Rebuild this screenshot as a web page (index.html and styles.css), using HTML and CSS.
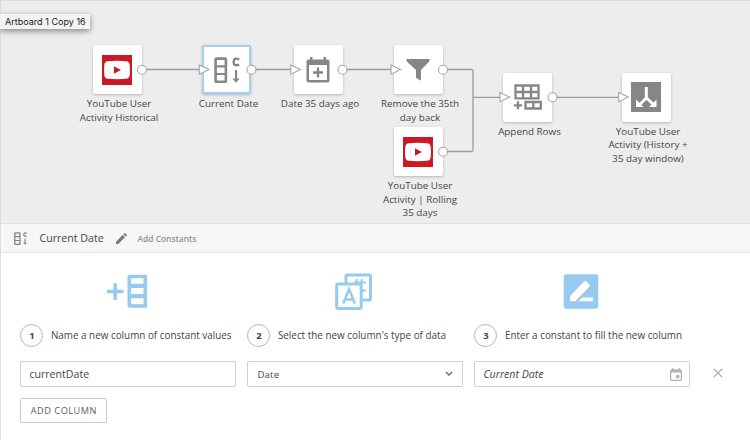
FILE: index.html
```html
<!DOCTYPE html>
<html lang="en">
<head>
<meta charset="utf-8">
<title>Current Date</title>
<link rel="stylesheet" href="styles.css">
</head>
<body>
<svg class="defs" width="0" height="0" aria-hidden="true">
  <symbol id="youtube" viewBox="0 0 30 30">
    <path fill="#cc1a25" d="M0 0h30v30H0z"/>
    <path fill="#fff" d="M6 6.2Q15 5.4 24 6.2 27.4 6.4 27.7 10q.5 5 0 10-.3 3.600-3.700 3.800-9 .8-18 0Q2.600 23.600 2.300 20q-.5-5 0-10Q2.600 6.400 6 6.200z"/>
    <path fill="#cc1a25" d="M12 11.300v7.400l7-3.700z"/>
  </symbol>
  <symbol id="constants" viewBox="0 0 26 26">
    <rect x="1.600" y="1.600" width="10.300" height="23.300" rx=".8" fill="none" stroke="currentColor" stroke-width="2.600"/>
    <path fill="none" stroke="currentColor" stroke-width="2.200" d="M2 9.300h9.500M2 17h9.500"/>
    <path fill="none" stroke="currentColor" stroke-width="2.400" d="M25.300 2.300Q19.600.2 19.600 4.900t5.700 2.800"/>
    <path fill="currentColor" d="M21 13h2.200v8.500h2.500L22.100 25.700l-3.700-4.200H21z"/>
  </symbol>
</svg>

<main class="app">
  <section class="canvas">
    <svg class="wires" width="750" height="222" viewBox="0 0 750 222">
      <path d="M142 69.500h60M251 69.500h42M342 69.500h51M442 69.500h29.500q1.500 0 1.500 1.500v79q0 1.500-1.500 1.500H442M473 97.300h30M552 97.300h70"/>
    </svg>

    <div class="node n1"><div class="tile"><svg class="yt"><use href="#youtube"/></svg></div><p>YouTube User<br>Activity Historical</p></div>
    <div class="node n2"><div class="tile selected"><svg class="constants"><use href="#constants"/></svg></div><p>Current Date</p></div>
    <div class="node n3"><div class="tile"><svg width="24" height="26" viewBox="0 0 24 26"><path fill="currentColor" fill-rule="evenodd" d="M4 0h2.500v2.500h11V0H20v2.500h1.500Q23.500 2.500 23.500 4.500v19q0 2-2 2h-19q-2 0-2-2v-19q0-2 2-2H4zM3 8v15h18V8zM10.800 10.500h2.400v3.800H17v2.400h-3.800v3.800h-2.400v-3.800H7v-2.400h3.800z"/></svg></div><p>Date 35 days ago</p></div>
    <div class="node n4"><div class="tile"><svg width="24" height="22" viewBox="0 0 24 22"><path fill="currentColor" d="M.500 0h23q.5 1.500-.8 3L15 11v10.800l-5-3V11L1.300 3Q.200 1.500.500 0z"/></svg></div><p>Remove the 35th<br>day back</p></div>
    <div class="node n5"><div class="tile"><svg class="yt"><use href="#youtube"/></svg></div><p>YouTube User<br>Activity | Rolling<br>35 days</p></div>
    <div class="node n6"><div class="tile"><svg width="28" height="26" viewBox="0 0 28 26"><path fill="none" stroke="currentColor" stroke-width="2.300" d="M1.500 1.500h23v12.800h-23zM1.500 8h23M9 1.500v13M17 1.500v13M11.500 18h15.300v6.500H11.500zM19.300 18v6.500M0 21.300h8M4 17.300v8"/></svg></div><p>Append Rows</p></div>
    <div class="node n7"><div class="tile"><svg width="30" height="30" viewBox="0 0 30 30"><path fill="#868686" d="M0 0h30v30H0z"/><path fill="none" stroke="#fff" stroke-width="3" d="M15.300 5v11l-7 7M15 15.500l8 7.500"/><path fill="#fff" d="M5 17.500l7.500 7.500H5zM25.500 17.500V25H18z"/></svg></div><p>YouTube User<br>Activity (History +<br>35 day window)</p></div>

    <svg class="ports" width="750" height="222" viewBox="0 0 750 222">
      <g><circle cx="142" cy="69.700" r="4.500"/><circle cx="251.500" cy="69.700" r="4.500"/><circle cx="342.500" cy="69.700" r="4.500"/><circle cx="443" cy="69.700" r="4.500"/><circle cx="443" cy="151.700" r="4.500"/><circle cx="552.500" cy="97.200" r="4.500"/>
      <path d="M199.300 65l9.600 4.600-9.600 4.600zM290.800 65l9.600 4.600-9.600 4.600zM391 65l9.600 4.600-9.600 4.600zM500 92.500l9.600 4.600-9.600 4.600zM618.700 92.500l9.600 4.600-9.600 4.600z"/></g>
    </svg>
    <div class="tooltip">Artboard 1 Copy 16</div>
  </section>

  <header class="bar">
    <svg class="bar-icon"><use href="#constants"/></svg>
    <h1>Current Date</h1>
    <svg class="pencil" width="11" height="11" viewBox="0 0 11 11"><path fill="currentColor" d="M0 8.800L6.700 2.100l2.200 2.200L2.200 11H0zM7.400 1.400L8.500.3q.4-.4.8 0l1.400 1.400q.4.4 0 .8L9.600 3.600z"/></svg>
    <span class="kind">Add Constants</span>
  </header>

  <section class="form">
    <div class="step">
      <div class="art"><svg width="42" height="36" viewBox="0 0 42 36"><path fill="none" stroke="currentColor" stroke-width="3.600" d="M1 17.500h16.500M9.200 9.300v16.500"/><path fill="currentColor" fill-rule="evenodd" d="M24 .800h17v33H24q-2.500 0-2.500-2.500v-28q0-2.500 2.500-2.500zM25 4.300v5.500h12.500V4.300zM25 14v6h12.500v-6zM25 24.300v6h12.500v-6z"/></svg></div>
      <div class="caption"><b>1</b><span>Name a new column of constant values</span></div>
      <div class="field name">currentDate</div>
      <button class="add">ADD COLUMN</button>
    </div>
    <div class="step">
      <div class="art"><svg width="38" height="38" viewBox="0 0 38 38"><g fill="none" stroke="currentColor" stroke-width="3"><path d="M11 10V3Q11 2 12 2h22q1.500 0 1.500 1.500v22q0 1.500-1.500 1.500h-6.500"/><rect x="1.700" y="11" width="24.500" height="24.500" rx="1.500"/><path stroke-width="2" d="M22 6l-1 4M27 6l-1 4M19 9.500H31M27 17.500h4"/><path stroke-width="2.500" d="M8.300 30.500l5.800-14.500L19.900 30.500M10 26.500h8"/></g></svg></div>
      <div class="caption"><b>2</b><span>Select the new column's type of data</span></div>
      <div class="field select"><span>Date</span><svg width="8" height="6" viewBox="0 0 8 6"><path fill="none" stroke="#666" stroke-width="1.400" d="M1 1l3 3 3-3"/></svg></div>
    </div>
    <div class="step">
      <div class="art"><svg width="36" height="36" viewBox="0 0 36 36"><rect x=".7" y=".3" width="34.600" height="34.500" rx="3" fill="currentColor"/><path fill="#fff" d="M7 22.300L21 7.600q1.200-1 2.400 0l3 3q1 1 0 2.200L12.300 27.300H7zM15.500 27.300l4-3.700H30v3.700z"/></svg></div>
      <div class="caption"><b>3</b><span>Enter a constant to fill the new column</span></div>
      <div class="field date"><span>Current Date</span><svg width="12" height="13" viewBox="0 0 12 13"><path fill="#b3b3b3" fill-rule="evenodd" d="M2 0h1.300v1.300h5.400V0H10v1.300q2 0 2 1.700v8.300q0 1.700-1.700 1.700H1.700Q0 13 0 11.300V3q0-1.700 2-1.700zM1.300 4.500v7.200h9.400V4.500zM6 7h3.300v3.300H6z"/></svg></div>
    </div>
    <svg class="remove" width="10" height="10" viewBox="0 0 10 10"><path fill="none" stroke="#a4a4a4" stroke-width="1.200" d="M.8.800l8.400 8.400M9.200.800L.8 9.200"/></svg>
  </section>
</main>
</body>
</html>
```
FILE: styles.css
```css
* { box-sizing: border-box; margin: 0; }
body { width: 750px; height: 440px; overflow: hidden; background: #fff; color: #454545; font: 10px "Open Sans", "Noto Sans", sans-serif; }
.defs { position: absolute; }
svg { display: block; flex: none; }
.app { height: 440px; border-left: 1px solid #dedede; }
.canvas { position: relative; height: 223px; margin-left: -1px; background: #ededed; border-top: 1px solid #dcdcdc; border-left: 1px solid #dedede; }
.wires, .ports { position: absolute; left: -1px; top: -1px; }
.wires path { fill: none; stroke: #9c9c9c; stroke-width: 1.3; }
.ports { pointer-events: none; }
.ports g { fill: #fff; stroke: #a6a6a6; stroke-width: 1.1; }
.node { position: absolute; width: 120px; margin: -1px 0 0 -1px; display: flex; flex-direction: column; align-items: center; text-align: center; }
.node p { margin-top: 3px; padding-left: 4px; font-size: 9.85px; line-height: 13.7px; white-space: nowrap; }
.tile { width: 49px; height: 49px; display: flex; align-items: center; justify-content: center; background: #fff; border-radius: 2px; box-shadow: 0 1px 3px rgba(0,0,0,.24); color: #868686; }
.tile.selected { border: 2px solid #a0d0f2; }
.yt { width: 30px; height: 30px; }
.constants { width: 26px; height: 26px; }
.n1 { left: 57px; top: 45px; }
.n2 { left: 166.500px; top: 45px; }
.n3 { left: 258px; top: 45px; }
.n4 { left: 358px; top: 45px; }
.n5 { left: 358px; top: 127px; }
.n6 { left: 467.500px; top: 72.500px; }
.n7 { left: 586px; top: 72.500px; }
.tooltip { position: absolute; left: -1px; top: 13px; width: 90px; height: 15px; padding-left: 5px; background: #f3f3f3; color: #222; font: 9px/15px Inter, sans-serif; letter-spacing: .02px; white-space: nowrap; box-shadow: 0 2px 6px rgba(0,0,0,.45); }
.bar { height: 30px; display: flex; align-items: center; padding-left: 13px; background: #f6f6f6; border-top: 1px solid #dfdfdf; border-bottom: 1px solid #e4e4e4; }
.bar-icon { width: 13px; height: 13px; color: #858585; }
h1 { width: 64px; margin-left: 12.500px; font-size: 10.600px; font-weight: 400; white-space: nowrap; }
.pencil { margin-left: 12px; color: #777; }
.kind { margin-left: 11px; padding-top: 1px; font-size: 8.400px; font-weight: 600; color: #929292; }
.form { display: flex; gap: 11px; padding: 20px 0 0 19.400px; }
.step { width: 216px; flex: none; }
.art { height: 38px; display: flex; align-items: center; justify-content: center; padding-right: 2px; color: #96caee; }
.step:first-child .art { padding-right: 3px; }
.caption { display: flex; align-items: center; height: 24px; margin-top: 12px; gap: 7.500px; white-space: nowrap; font-size: 9.900px; }
.caption b { width: 23px; height: 23px; border: 1px solid #b7b7b7; border-radius: 50%; text-align: center; line-height: 21px; font-size: 9.500px; }
.field { height: 26px; margin-top: 14px; padding: 0 8px; border: 1px solid #cfcfcf; border-radius: 2px; display: flex; align-items: center; justify-content: space-between; font-size: 10.6px; }
.select { padding-left: 9px; font-size: 9.600px; letter-spacing: .2px; }
.select svg { margin-right: 1px; }
.date { font-style: italic; font-size: 10.600px; padding-right: 7px; }
.add { display: block; width: 87px; height: 25px; margin-top: 11px; padding: 0; border: 1px solid #c9c9c9; border-radius: 2px; background: #fff; color: #5c5c5c; font: 9.2px "Open Sans", sans-serif; letter-spacing: .5px; }
.remove { margin: 95px 0 0 12px; }
```
